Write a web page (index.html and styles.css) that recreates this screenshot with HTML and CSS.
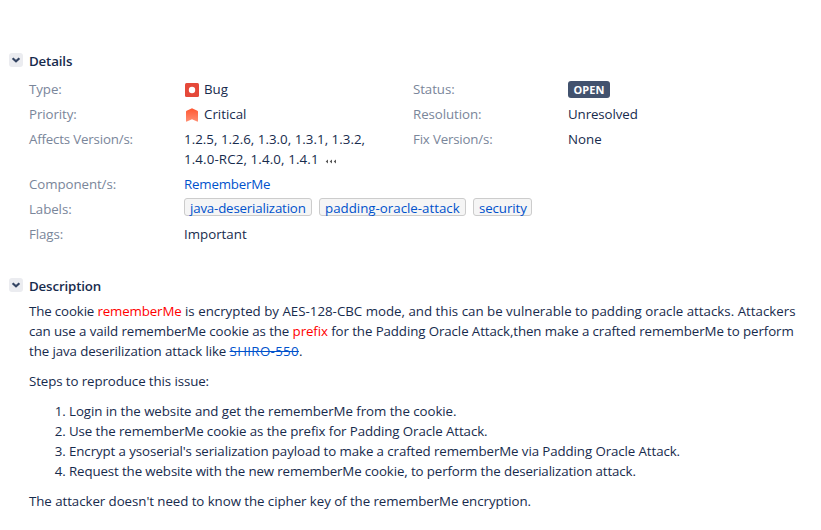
FILE: index.html
```html
<!DOCTYPE html>
<html lang="en">
<head>
<meta charset="utf-8">
<title>Issue details</title>
<link rel="stylesheet" href="styles.css">
</head>
<body>
<main class="issue">
  <section class="module">
    <header class="module-head">
      <button class="toggle" aria-label="Toggle details"><svg width="14" height="14" viewBox="0 0 14 14"><path d="M3.600 5.300 7 8.300l3.400-3" fill="none" stroke="#344563" stroke-width="2.200"/></svg></button>
      <h2>Details</h2>
    </header>
    <div class="fields">
      <dl class="column">
        <dt>Type:</dt>
        <dd class="with-icon"><svg width="14" height="14" viewBox="0 0 14 14"><rect width="14" height="14" rx="1.5" fill="#e5493a"/><circle cx="7" cy="7" r="3.2" fill="#fff"/></svg>Bug</dd>
        <dt>Priority:</dt>
        <dd class="with-icon"><svg width="14" height="14" viewBox="0 0 14 14"><defs><linearGradient id="crit" x1="0" y1="0" x2="0" y2="1"><stop offset="0" stop-color="#ff5630"/><stop offset="1" stop-color="#ff8f73"/></linearGradient></defs><path d="M1 3.6Q1 3 1.6 2.7L6.5.4Q7 .1 7.5.4L12.4 2.7Q13 3 13 3.6V13q0 1-.9.6L7 11.3l-5.100 2.300Q1 14 1 13Z" fill="url(#crit)"/></svg>Critical</dd>
        <dt class="long">Affects Version/s:</dt>
        <dd class="versions">1.2.5, 1.2.6, 1.3.0, 1.3.1, 1.3.2,<br><span class="wide">1.4.0-RC2, 1.4.0, 1.4.1</span> <svg class="more" width="12" height="5" viewBox="0 0 12 5"><path d="M3 .5v4l-2.300-2zM7 .5v4l-2.300-2zM11 .5v4l-2.300-2z" fill="#555"/></svg></dd>
        <dt>Component/s:</dt>
        <dd><a class="component">RememberMe</a></dd>
        <dt>Labels:</dt>
        <dd class="labels"><a class="tag-java">java-deserialization</a><a class="tag-padding">padding-oracle-attack</a><a class="tag-security">security</a></dd>
        <dt>Flags:</dt>
        <dd>Important</dd>
      </dl>
      <dl class="column">
        <dt>Status:</dt>
        <dd><span class="lozenge">OPEN</span></dd>
        <dt>Resolution:</dt>
        <dd class="resolution">Unresolved</dd>
        <dt class="long">Fix Version/s:</dt>
        <dd>None</dd>
      </dl>
    </div>
  </section>
  <section class="module description">
    <header class="module-head">
      <button class="toggle" aria-label="Toggle description"><svg width="14" height="14" viewBox="0 0 14 14"><path d="M3.600 5.300 7 8.300l3.400-3" fill="none" stroke="#344563" stroke-width="2.200"/></svg></button>
      <h2>Description</h2>
    </header>
    <div class="content">
      <p><span class="lead">The cookie <em>rememberMe</em></span> is encrypted by AES-128-CBC mode, and this can be vulnerable to padding oracle attacks. Attackers<br><span class="tight">can use a vaild rememberMe cookie as the <em class="prefix">prefix</em> for the Padding Oracle Attack,then make a crafted rememberMe to perform</span><br><span class="tight">the java deserilization attack like </span><a class="resolved">SHIRO-550</a>.</p>
      <p class="tight">Steps to reproduce this issue:</p>
      <ol>
        <li class="snug">Login in the website and get the rememberMe from the cookie.</li>
        <li class="tight">Use the rememberMe cookie as the prefix for Padding Oracle Attack.</li>
        <li class="tight">Encrypt a ysoserial's serialization payload to make a crafted rememberMe via Padding Oracle Attack.</li>
        <li class="tighter">Request the website with the new rememberMe cookie, to perform the deserialization attack.</li>
      </ol>
      <p class="snug">The attacker doesn't need to know the cipher key of the rememberMe encryption.</p>
    </div>
  </section>
</main>
</body>
</html>
```
FILE: styles.css
```css
* { box-sizing: border-box; }
body {
  margin: 0;
  background: #fff;
  color: #172b4d;
  font: 13.3px/20px "Open Sans", "Noto Sans", sans-serif;
}
.issue { padding: 51px 0 0 9px; }
.module-head { display: flex; align-items: center; height: 20px; gap: 6px; }
.toggle {
  width: 14px; height: 14px; margin: 0 0 2px; padding: 0;
  border: 0; border-radius: 3px; background: #ebecf0;
}
.toggle svg { display: block; }
h2 { margin: 0; font-size: 13.3px; font-weight: 600; line-height: 20px; letter-spacing: -0.15px; }
.fields { display: grid; grid-template-columns: 384px 1fr; padding: 8px 0 0 20px; }
.column {
  display: grid; grid-template-columns: 155px 1fr; row-gap: 5px;
  align-content: start; margin: 0; white-space: nowrap;
}
dt { color: #7a869a; letter-spacing: -0.08px; }
dt.long { letter-spacing: -0.18px; }
dd { margin: 0; }
.with-icon { display: flex; align-items: center; gap: 5px; padding-left: 1px; }
.with-icon svg { margin-top: 2px; }
.wide { letter-spacing: 0.13px; }
.versions { letter-spacing: 0.03px; }
.resolution { letter-spacing: -0.1px; }
.more { margin-left: 3px; vertical-align: 0; }
a { color: #0052cc; }
.component { letter-spacing: -0.2px; }
.labels { display: flex; gap: 7px; height: 20px; }
.labels a {
  height: 18px; margin-top: -1px; padding: 0 5px;
  border: 1px solid #ccc; border-radius: 3px; background: #f5f5f5;
  line-height: 18px;
}
.tag-java { width: 128px; letter-spacing: -0.18px; }
.tag-padding { width: 147px; }
.tag-security { width: 59px; letter-spacing: -0.1px; }
.lozenge {
  display: block; width: 42px; height: 17px; margin-top: 2px;
  border-radius: 3px; background: #42526e; color: #fff;
  font-size: 11px; font-weight: 700; line-height: 18px; text-align: center;
}
.description { margin-top: 32px; }
.content { padding: 5px 0 0 20px; white-space: nowrap; }
p { margin: 0 0 10px; }
em { color: #f00; font-style: normal; }
.lead { letter-spacing: -0.14px; }
.snug { letter-spacing: -0.06px; }
.tight { letter-spacing: -0.095px; }
.tighter { letter-spacing: -0.12px; }
.resolved { text-decoration: line-through; letter-spacing: 0.33px; }
ol { margin: 0 0 10px; padding-left: 40px; }
```
